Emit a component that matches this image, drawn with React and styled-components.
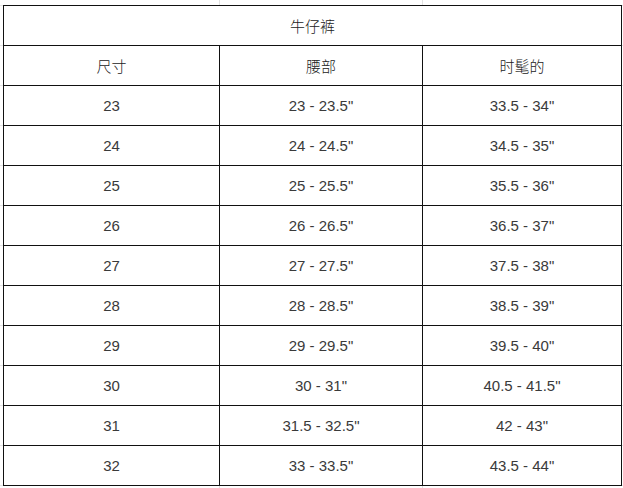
import React from 'react';
import styled, { createGlobalStyle } from 'styled-components';

const GlobalStyle = createGlobalStyle`
  body {
    margin: 0;
    background: #fff;
    font-family: "Liberation Sans", Arial, "Noto Sans CJK SC", sans-serif;
  }
`;

// faint spreadsheet grid peeking out around the table
const Sheet = styled.div`
  width: 623px;
  height: 488px;
  box-sizing: border-box;
  padding: 5px 0 0 3px;
  background-image:
    linear-gradient(to right, transparent 219px, #e2e2e2 219px, #e2e2e2 220px, transparent 220px),
    linear-gradient(to right, transparent 422px, #e2e2e2 422px, #e2e2e2 423px, transparent 423px),
    repeating-linear-gradient(to bottom, #e2e2e2 0 1px, transparent 1px 40px);
  background-position: 0 0, 0 0, 0 5px;
  background-repeat: no-repeat, no-repeat, repeat-y;
`;

const Table = styled.table`
  border-collapse: collapse;
  table-layout: fixed;
  width: 618px;
  background: #fff;
  color: #3a3a3a;
  font-size: 15px;
`;

const Row = styled.tr`
  height: 40px;
`;

const Cell = styled.td`
  border: 1px solid #111;
  padding: 0;
  text-align: center;
  vertical-align: middle;
  font-family: ${(p) =>
    p.$cjk
      ? '"Noto Sans CJK SC", "Liberation Sans", sans-serif'
      : '"Liberation Sans", Arial, sans-serif'};
  font-weight: ${(p) => (p.$cjk ? 300 : 400)};
  color: ${(p) => (p.$cjk ? '#222' : '#3a3a3a')};
`;

const rows = [
  ['23', '23 - 23.5"', '33.5 - 34"'],
  ['24', '24 - 24.5"', '34.5 - 35"'],
  ['25', '25 - 25.5"', '35.5 - 36"'],
  ['26', '26 - 26.5"', '36.5 - 37"'],
  ['27', '27 - 27.5"', '37.5 - 38"'],
  ['28', '28 - 28.5"', '38.5 - 39"'],
  ['29', '29 - 29.5"', '39.5 - 40"'],
  ['30', '30 - 31"', '40.5 - 41.5"'],
  ['31', '31.5 - 32.5"', '42 - 43"'],
  ['32', '33 - 33.5"', '43.5 - 44"'],
];

const App = () => (
  <>
    <GlobalStyle />
    <Sheet>
      <Table>
        <colgroup>
          <col style={{ width: 216 }} />
          <col style={{ width: 203 }} />
          <col style={{ width: 199 }} />
        </colgroup>
        <tbody>
          <Row>
            <Cell $cjk colSpan={3}>牛仔裤</Cell>
          </Row>
          <Row>
            <Cell $cjk>尺寸</Cell>
            <Cell $cjk>腰部</Cell>
            <Cell $cjk>时髦的</Cell>
          </Row>
          {rows.map((r) => (
            <Row key={r[0]}>
              {r.map((v, i) => (
                <Cell key={i}>{v}</Cell>
              ))}
            </Row>
          ))}
        </tbody>
      </Table>
    </Sheet>
  </>
);

export default App;
